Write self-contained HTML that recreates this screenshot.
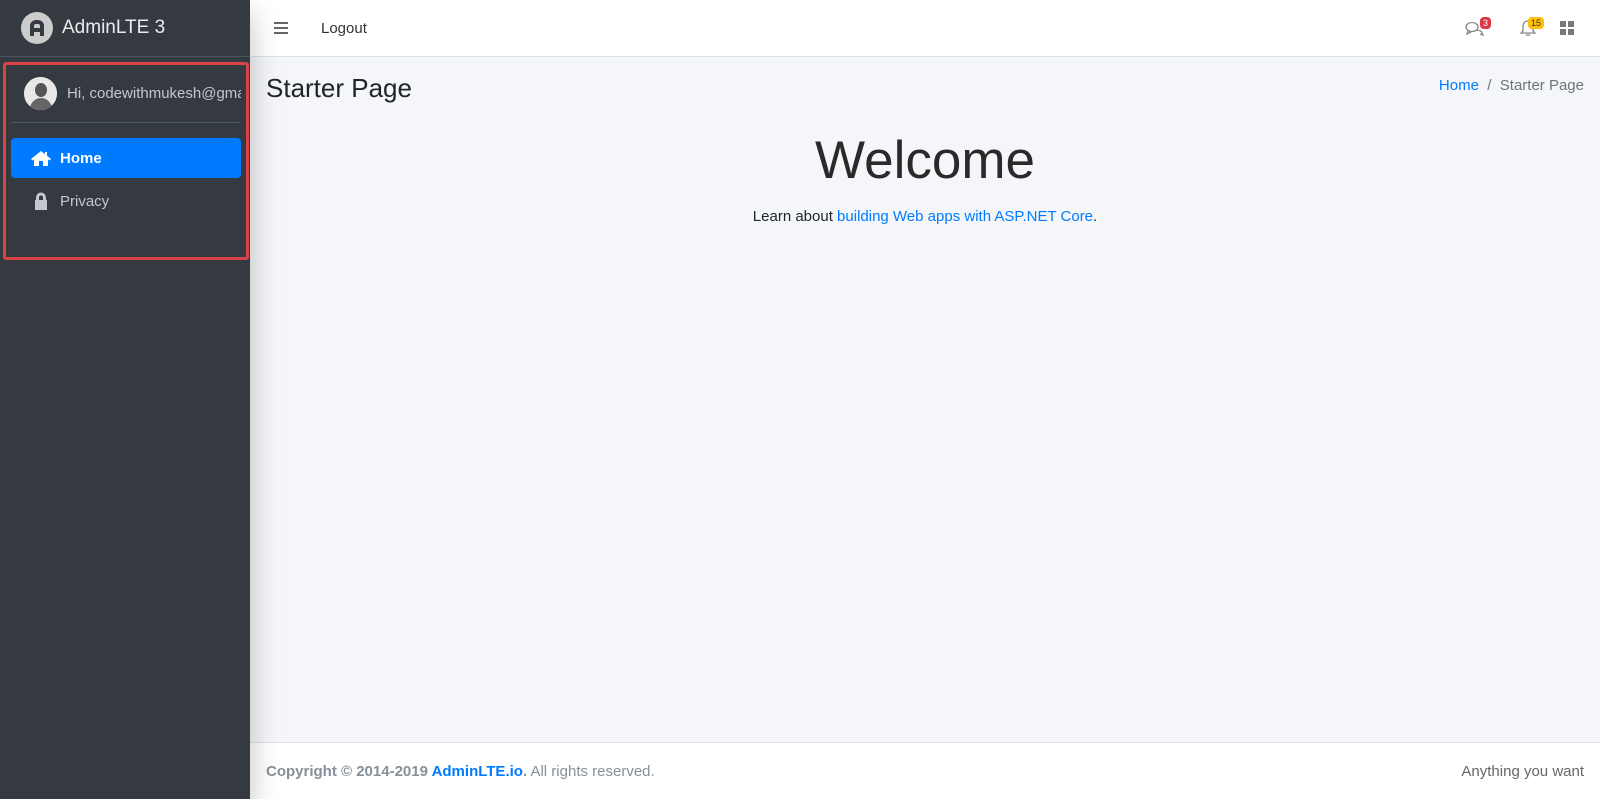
<!DOCTYPE html>
<html><head><meta charset="utf-8"><style>
*{box-sizing:border-box;margin:0;padding:0}
body{width:1600px;height:799px;overflow:hidden;font-family:"Liberation Sans",sans-serif;background:#f4f6f9;position:relative;color:#212529}
.sb{position:absolute;left:0;top:0;width:250px;height:799px;background:#343a40;box-shadow:0 14px 28px rgba(0,0,0,.25);z-index:2}
.brand{height:57px;border-bottom:1px solid #4b545c;display:flex;align-items:center;padding-left:21px;color:#e9ecef;font-size:19px}
.logo{width:32px;height:32px;border-radius:50%;background:#ccc;margin-right:9px;display:flex;align-items:center;justify-content:center}
.panel{position:absolute;left:3px;top:62px;width:246px;height:198px;border:3px solid #d9434a;border-radius:3px}
.user{display:flex;align-items:center;height:58px;border-bottom:1px solid #4f5962;margin:0 5px;padding-left:13px;color:#c2c7d0;font-size:15px;white-space:nowrap;overflow:hidden}
.av{width:33px;height:33px;border-radius:50%;background:#ddd;margin-right:10px;flex:none;overflow:hidden}
.nav{margin:15px 5px 0}
.it{height:40px;border-radius:4px;display:flex;align-items:center;padding-left:20px;color:#c2c7d0;font-size:15px;margin-bottom:3px}
.it svg{margin-right:9px}
.act{background:#007bff;color:#fff;font-weight:bold}
.top{position:absolute;left:250px;top:0;width:1350px;height:57px;background:#fff;border-bottom:1px solid #dee2e6}
.foot{position:absolute;left:250px;width:1350px;bottom:0;height:57px;background:#fff;border-top:1px solid #dee2e6;color:#869099;font-size:15px;display:flex;align-items:center;justify-content:space-between;padding:0 16px}
a{color:#007bff;text-decoration:none}
.badge{position:absolute;font-size:9px;border-radius:4px;padding:1px 3px;line-height:10px}
</style></head><body>
<div class="sb">
 <div class="brand"><div class="logo"><svg width="20" height="20" viewBox="0 0 20 20"><path d="M3 18V8a6 6 0 0 1 6-6h2a6 6 0 0 1 6 6v10h-4v-4H7v4zM7 10h6V8a2 2 0 0 0-2-2H9a2 2 0 0 0-2 2z" fill="#343a40"/></svg></div>AdminLTE 3</div>
 <div class="panel">
  <div class="user"><div class="av"><svg width="33" height="33"><rect width="33" height="33" fill="#e8e8e8"/><ellipse cx="17" cy="13" rx="6" ry="7" fill="#555"/><path d="M5 33q3-12 12-12t12 12z" fill="#666"/></svg></div>Hi, codewithmukesh@gmail.com</div>
  <div class="nav">
   <div class="it act"><svg width="20" height="16" viewBox="0 0 20 16"><path d="M10 1L0 9l1.5 1.5L3 9.3V16h5v-5h4v5h5V9.3l1.5 1.2L20 9 16 5.8V2h-2v2.2z" fill="#fff"/></svg>Home</div>
   <div class="it"><svg width="20" height="18" viewBox="0 0 20 18"><path d="M5 8V5.5a5 5 0 0 1 10 0V8h1v10H4V8zM8 8h4V5.5a2 2 0 0 0-4 0z" fill="#c2c7d0"/></svg>Privacy</div>
  </div>
 </div>
</div>
<div class="top">
 <svg style="position:absolute;left:24px;top:22px" width="14" height="12"><rect y="0" width="14" height="2" fill="#666"/><rect y="5" width="14" height="2" fill="#666"/><rect y="10" width="14" height="2" fill="#666"/></svg>
 <div style="position:absolute;left:71px;top:20px;font-size:15px;color:#333">Logout</div>
 <svg style="position:absolute;left:1215px;top:21px" width="20" height="16" viewBox="0 0 20 16"><ellipse cx="7" cy="6" rx="6" ry="4.5" fill="none" stroke="#888" stroke-width="1.3"/><path d="M3 10l-1 3 4-2M11 9q5 0 6 3l1 2-3-1" fill="none" stroke="#888" stroke-width="1.3"/></svg>
 <span class="badge" style="left:1230px;top:17px;background:#dc3545;color:#fff">3</span>
 <svg style="position:absolute;left:1270px;top:19px" width="16" height="18" viewBox="0 0 16 18"><path d="M8 2q5 0 5 6v4l2 2H1l2-2V8q0-6 5-6zM6 16h4" fill="none" stroke="#888" stroke-width="1.3"/></svg>
 <span class="badge" style="left:1278px;top:17px;background:#ffc107;color:#333">15</span>
 <svg style="position:absolute;left:1310px;top:21px" width="14" height="14"><rect width="6" height="6" fill="#777"/><rect x="8" width="6" height="6" fill="#777"/><rect y="8" width="6" height="6" fill="#777"/><rect x="8" y="8" width="6" height="6" fill="#777"/></svg>
</div>
<div style="position:absolute;left:266px;top:73px;font-size:26px;color:#212529">Starter Page</div>
<div style="position:absolute;right:16px;top:77px;font-size:15px;color:#6c757d"><a>Home</a>&nbsp;&nbsp;/&nbsp;&nbsp;Starter Page</div>
<div style="position:absolute;left:250px;width:1350px;top:130px;text-align:center;font-size:53px;color:#2a2a2a">Welcome</div>
<div style="position:absolute;left:250px;width:1350px;top:208px;text-align:center;font-size:15px">Learn about <a>building Web apps with ASP.NET Core</a>.</div>
<div class="foot"><div><b>Copyright © 2014-2019 <a>AdminLTE.io</a>.</b> All rights reserved.</div><div style="color:#666">Anything you want</div></div>
</body></html>
